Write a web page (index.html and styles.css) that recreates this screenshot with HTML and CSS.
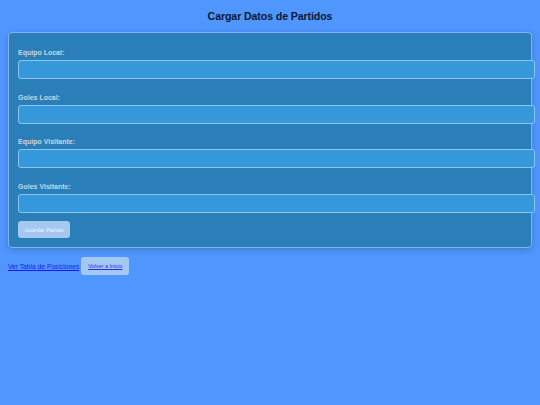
FILE: index.html
```html
<!DOCTYPE html>
<html lang="es">
<head>
<meta charset="utf-8">
<title>Cargar Datos de Partidos</title>
<link rel="stylesheet" href="styles.css">
</head>
<body>
<h1 class="title">Cargar Datos de Partidos</h1>
<form class="card">
  <div class="group">
    <label class="label">Equipo Local:</label>
    <input class="field" type="text">
  </div>
  <div class="group">
    <label class="label">Goles Local:</label>
    <input class="field" type="text">
  </div>
  <div class="group">
    <label class="label">Equipo Visitante:</label>
    <input class="field" type="text">
  </div>
  <div class="group">
    <label class="label">Goles Visitante:</label>
    <input class="field" type="text">
  </div>
  <button class="btn" type="button">Guardar Partido</button>
</form>
<div class="links">
  <a class="link" href="#">Ver Tabla de Posiciones</a>
  <a class="back" href="#">Volver a Inicio</a>
</div>
</body>
</html>
```
FILE: styles.css
```css
html, body {
  margin: 0;
  padding: 0;
}
body {
  background: #5096ff;
  font-family: "Liberation Sans", Arial, sans-serif;
  padding: 8px;
  min-height: 405px;
  box-sizing: border-box;
}
.title {
  margin: 0;
  padding-top: 1px;
  text-align: center;
  font-size: 10.6px;
  letter-spacing: -0.1px;
  font-weight: bold;
  color: #0b1930;
  line-height: 14px;
  height: 23px;
}
.card {
  background: #2b7fb9;
  border: 1px solid #7db3ee;
  border-radius: 4px;
  box-shadow: 0 2px 6px rgba(0, 0, 0, 0.18);
  padding: 16px 9px 9px 9px;
  margin: 0;
}
.group {
  display: flex;
  flex-direction: column;
  margin-bottom: 14.5px;
}
.label {
  font-size: 7px;
  font-weight: bold;
  color: #c5d6e6;
  line-height: 8px;
  margin-bottom: 3px;
}
.field {
  display: block;
  width: calc(100% + 13px);
  box-sizing: border-box;
  height: 19px;
  margin: 0;
  background: #3498db;
  border: 1px solid #8cc4f2;
  border-radius: 3px;
  padding: 0 6px;
  font-size: 8px;
}
.btn {
  display: block;
  margin-top: -6px;
  background: #a5c8f3;
  border: none;
  border-radius: 3px;
  color: #eef4fb;
  font-family: "Liberation Sans", Arial, sans-serif;
  font-size: 5.5px;
  width: 52px;
  height: 17px;
  padding: 0;
}
.links {
  display: flex;
  align-items: center;
  margin-top: 9px;
}
.link {
  font-size: 6.7px;
  color: #1a1aee;
  text-decoration: underline;
}
.back {
  margin-left: 2px;
  background: #a5c8f3;
  border-radius: 3px;
  width: 48px;
  height: 18px;
  display: flex;
  align-items: center;
  justify-content: center;
  font-size: 5.5px;
  color: #2a2ae0;
  text-decoration: underline;
}
```
